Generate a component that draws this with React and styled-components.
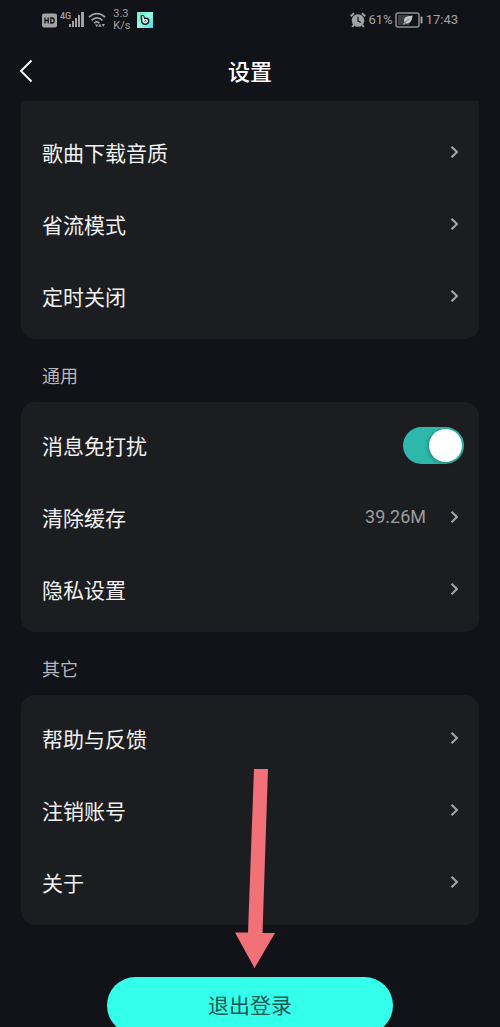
import { useState } from "react";
import styled, { createGlobalStyle } from "styled-components";

const GlobalStyle = createGlobalStyle`
  * {
    box-sizing: border-box;
  }
  body {
    margin: 0;
    background-color: #121318;
    color: #f1f1f2;
    font-family: Roboto, "Noto Sans CJK SC", sans-serif;
  }
  button {
    border: none;
    padding: 0;
    background: none;
    color: inherit;
    font: inherit;
    cursor: pointer;
  }
`;

const Screen = styled.div`
  height: 100vh;
  display: flex;
  flex-direction: column;
  overflow: hidden;
`;

const StatusBar = styled.div`
  flex: none;
  height: 40px;
  padding: 0 42px;
  display: flex;
  justify-content: space-between;
  align-items: center;
  color: #a2a2a5;
  font-family: Roboto, sans-serif;
  font-size: 13px;
  line-height: 16px;
`;

const StatusGroup = styled.div`
  display: flex;
  align-items: center;
  gap: 2px;
`;

const Network = styled.div`
  display: flex;
  align-items: center;
  gap: 3px;
`;

const NetworkType = styled.span`
  align-self: flex-start;
  margin-right: -5px;
  font-size: 9px;
  font-weight: 500;
  line-height: 8px;
`;

const Speed = styled.div`
  width: 20px;
  margin: 0 2px 0 5px;
  font-size: 11px;
  line-height: 12px;
`;

const Header = styled.header`
  flex: none;
  height: 61px;
  padding: 0 10px;
  display: grid;
  grid-template-columns: 32px 1fr 32px;
  align-items: center;
`;

const BackButton = styled.button`
  height: 40px;
  display: flex;
  align-items: center;
  justify-content: center;
`;

const Title = styled.h1`
  margin: 0;
  padding-top: 4px;
  font-size: 22px;
  font-weight: 500;
  line-height: 32px;
  text-align: center;
  color: #ffffff;
`;

const Content = styled.main`
  flex: 1;
  min-height: 0;
  overflow-y: auto;
  scrollbar-width: none;
`;

const Card = styled.section`
  margin: 0 21px;
  padding: ${(props) => (props.$continued ? "15px 0 7px" : "7px 0")};
  border-radius: ${(props) => (props.$continued ? "0 0 14px 14px" : "14px")};
  background-color: #1c1d21;
`;

const SectionHeading = styled.h2`
  margin: 0;
  padding: 26px 42px 13px;
  font-size: 18px;
  font-weight: 400;
  line-height: 24px;
  color: #b7b7ba;
`;

const RowButton = styled.button`
  width: 100%;
  height: 72px;
  padding: 0 20px 0 21px;
  display: flex;
  align-items: center;
  font-size: 21px;
  line-height: 32px;
  text-align: left;
`;

const SwitchRow = styled.label`
  height: 72px;
  padding: 0 15px 0 21px;
  display: flex;
  align-items: center;
  font-size: 21px;
  line-height: 32px;
  cursor: pointer;
`;

const RowLabel = styled.span`
  flex: 1;
  padding-top: 3px;
`;

const RowValue = styled.span`
  margin-right: 24px;
  font-size: 18px;
  color: #9c9c9f;
`;

const Switch = styled.input`
  appearance: none;
  width: 61px;
  height: 37px;
  margin: 0;
  padding: 2px;
  display: flex;
  justify-content: flex-start;
  border-radius: 19px;
  background-color: #45464b;
  cursor: pointer;
  &:before {
    content: "";
    width: 33px;
    height: 33px;
    border-radius: 50%;
    background-color: #ffffff;
    box-shadow: -1px 1px 4px rgba(0, 0, 0, 0.3);
  }
  &:checked {
    justify-content: flex-end;
    background-color: #2eb8ac;
  }
`;

const Footer = styled.div`
  position: relative;
  padding: 52px 107px 0;
`;

const LogoutButton = styled.button`
  width: 100%;
  height: 57px;
  display: block;
  border-radius: 29px;
  background-color: #33ffeb;
  color: #1c5954;
  font-size: 21px;
  line-height: 32px;
`;

const Pointer = styled.svg`
  position: absolute;
  left: 50%;
  bottom: 66px;
  margin-left: -15px;
  pointer-events: none;
`;

function Chevron() {
  return (
    <svg width="9" height="14" viewBox="0 0 9 14" fill="none">
      <path
        d="M1.5 1.7 7 7l-5.5 5.3"
        stroke="#a3a3a6"
        strokeWidth="2.2"
        strokeLinejoin="round"
      />
    </svg>
  );
}

function HdIcon() {
  return (
    <svg width="15" height="15" viewBox="0 0 15 15">
      <rect y="0.5" width="15" height="14" rx="2" fill="#a2a2a5" />
      <path
        d="M3 4.5v6M6.2 4.5v6M3 7.5h3.2M8.8 5v5h1.1c3 0 3-5 0-5z"
        fill="none"
        stroke="#17181c"
        strokeWidth="1.3"
      />
    </svg>
  );
}

function SignalIcon() {
  return (
    <svg width="16" height="16" viewBox="0 0 16 16" fill="#a2a2a5">
      <rect x="0" y="12" width="2" height="3" />
      <rect x="3" y="9" width="2" height="6" />
      <rect x="6" y="6" width="2" height="9" />
      <rect x="9" y="3" width="2" height="12" />
      <rect x="12" y="0" width="3" height="15" />
    </svg>
  );
}

function WifiIcon() {
  return (
    <svg width="18" height="16" viewBox="0 0 18 16" fill="none">
      <path
        d="M1 5.2c4.6-4.9 11.4-4.9 16 0M3.6 8.4c3.2-3.4 7.6-3.4 10.8 0M6.2 11.2c1.7-1.8 3.6-1.8 5 0"
        stroke="#a2a2a5"
        strokeWidth="1.8"
      />
      <path
        d="M7 12.5h3.5l-1.7 2.7zM12 11.6l1.6 3.2h-3.2zM13.6 12h3.4l-1.7 3z"
        fill="#a2a2a5"
      />
    </svg>
  );
}

function MusicAppIcon() {
  return (
    <svg width="16" height="16" viewBox="0 0 16 16">
      <defs>
        <linearGradient id="appTile" x1="0" y1="0" x2="1" y2="1">
          <stop offset="0" stopColor="#5ff0cb" />
          <stop offset="0.5" stopColor="#9df7e4" />
          <stop offset="1" stopColor="#3edce0" />
        </linearGradient>
      </defs>
      <rect width="16" height="16" fill="url(#appTile)" />
      <path
        d="M3.6 4.2C3.5 2.8 6 2.2 7 3.6l1 1.9c2.6-.5 4.800 1 4.600 3.500-.2 2.700-2.600 4.200-5 3.900C5 12.600 3.900 11 3.900 8.800z"
        fill="#14242a"
      />
      <path
        d="M5.200 4.400c.2-.6 1-.5 1.200 0l.9 2.800c2-.8 3.800 0 3.700 1.800-.1 1.700-1.700 2.600-3.300 2.400C6 11.200 5.400 10 5.400 8.500z"
        fill="#e6fff9"
      />
      <path d="M7.600 9.600c0-1 1.600-1.200 1.800-.2" fill="none" stroke="#14242a" />
    </svg>
  );
}

function AlarmIcon() {
  return (
    <svg width="16" height="16" viewBox="0 0 16 16" fill="none">
      <circle cx="8" cy="8.5" r="6.3" fill="#a2a2a5" />
      <path
        d="M.8 4.200 4 1.200M15.200 4.200 12 1.200M3.600 13 2.300 15M12.400 13l1.300 2"
        stroke="#a2a2a5"
        strokeWidth="2"
      />
      <path d="M8 4.800v4.200l2.800 1.500" stroke="#17181c" strokeWidth="1.300" />
    </svg>
  );
}

function BatteryIcon() {
  return (
    <svg width="29" height="16" viewBox="0 0 29 16" fill="none">
      <rect
        x="1"
        y="1"
        width="23"
        height="14"
        rx="2"
        stroke="#8f8f92"
        strokeWidth="1.5"
      />
      <rect x="3" y="3" width="11" height="10" fill="#3d3e42" />
      <rect x="25.5" y="4.5" width="2" height="7" rx="1" fill="#a2a2a5" />
      <path
        d="M17.5 3.5c-4.5.4-8.3 1.5-8.5 4.5 0 1 .3 1.7.7 2.3L8 12.1l.8.6 1.8-1.5c4.7 1.2 6.5-2.7 6.9-7.7z"
        fill="#c6c6c8"
      />
      <path d="M9.5 11.5c1.3-2.3 2.900-3.600 4.800-4.700" stroke="#6b6c70" strokeWidth="0.8" />
    </svg>
  );
}

function LinkRow({ label, value }) {
  return (
    <RowButton type="button">
      <RowLabel>{label}</RowLabel>
      {value && <RowValue>{value}</RowValue>}
      <Chevron />
    </RowButton>
  );
}

function App() {
  const [doNotDisturb, setDoNotDisturb] = useState(true);

  return (
    <Screen>
      <GlobalStyle />
      <StatusBar>
        <StatusGroup>
          <Network>
            <HdIcon />
            <NetworkType>4G</NetworkType>
            <SignalIcon />
            <WifiIcon />
          </Network>
          <Speed>3.3 K/s</Speed>
          <MusicAppIcon />
        </StatusGroup>
        <StatusGroup>
          <AlarmIcon />
          <span>61%</span>
          <BatteryIcon />
          <time>17:43</time>
        </StatusGroup>
      </StatusBar>
      <Header>
        <BackButton type="button" aria-label="返回">
          <svg width="14" height="24" viewBox="0 0 14 24" fill="none">
            <path d="M12.5 1.5 2 12l10.5 10.5" stroke="#f5f5f5" strokeWidth="2" />
          </svg>
        </BackButton>
        <Title>设置</Title>
      </Header>
      <Content>
        <Card $continued>
          <LinkRow label="歌曲下载音质" />
          <LinkRow label="省流模式" />
          <LinkRow label="定时关闭" />
        </Card>
        <SectionHeading>通用</SectionHeading>
        <Card>
          <SwitchRow>
            <RowLabel>消息免打扰</RowLabel>
            <Switch
              type="checkbox"
              checked={doNotDisturb}
              onChange={(e) => setDoNotDisturb(e.target.checked)}
            />
          </SwitchRow>
          <LinkRow label="清除缓存" value="39.26M" />
          <LinkRow label="隐私设置" />
        </Card>
        <SectionHeading>其它</SectionHeading>
        <Card>
          <LinkRow label="帮助与反馈" />
          <LinkRow label="注销账号" />
          <LinkRow label="关于" />
        </Card>
        <Footer>
          <LogoutButton type="button">退出登录</LogoutButton>
          <Pointer width="40" height="199" viewBox="0 0 40 199">
            <path d="M19 0h14l-5.5 164H40L19.5 199 0 163.5h13z" fill="#f27077" />
          </Pointer>
        </Footer>
      </Content>
    </Screen>
  );
}

export default App;
